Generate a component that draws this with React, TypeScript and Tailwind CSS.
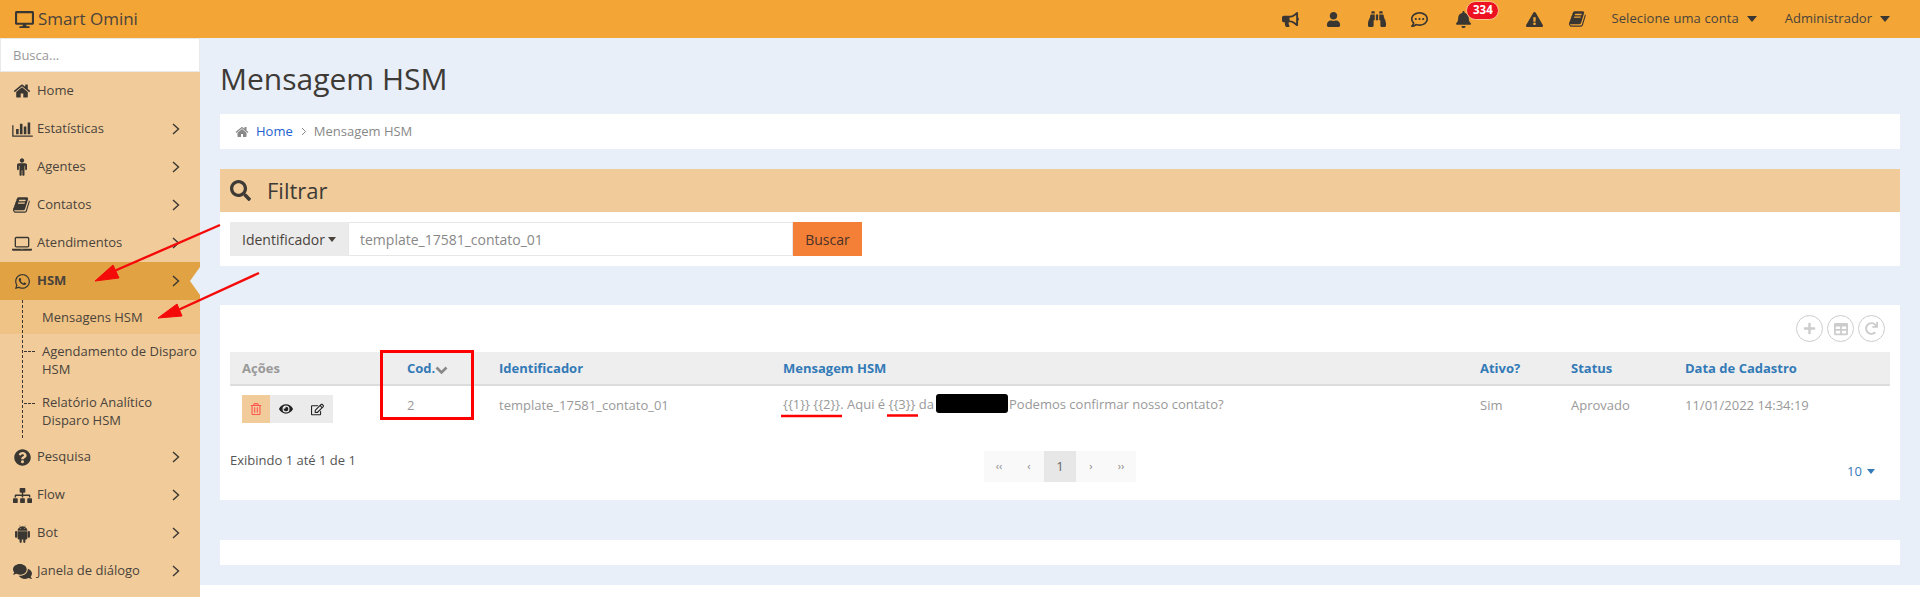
import type { ReactNode } from "react";
import {
  FaBell,
  FaBinoculars,
  FaBullhorn,
  FaComments,
  FaDesktop,
  FaExclamationTriangle,
  FaEye,
  FaPlus,
  FaQuestionCircle,
  FaRedo,
  FaRegCommentDots,
  FaRegEdit,
  FaRegTrashAlt,
  FaSearch,
  FaSitemap,
  FaTable,
  FaUser,
  FaWhatsapp,
} from "react-icons/fa";

const HOME_PATH =
  "M1472 992v480q0 26-19 45t-45 19h-384v-384h-256v384h-384q-26 0-45-19t-19-45v-480q0-1 .5-3t.5-3l575-474 575 474q1 2 1 6zm223-69l-62 74q-8 9-21 11h-3q-13 0-21-7l-692-577-692 577q-12 8-24 7-13-2-21-11l-62-74q-8-10-7-23.5t11-21.5l719-599q32-26 76-26t76 26l244 204v-195q0-14 9-23t23-9h192q14 0 23 9t9 23v408l219 182q10 8 11 21.5t-7 23.5z";
const BOOK_PATH =
  "M1639 478q40 57 18 129l-275 906q-19 64-76.5 107.5t-122.5 43.5h-923q-77 0-148.5-53.5t-99.5-131.5q-24-67-2-127 0-4 3-27t4-37q1-8-3-21.5t-3-19.5q2-11 8-21t16.5-23.5 16.5-23.5q23-38 45-91.5t30-91.5q3-10 .5-30t-.5-28q3-11 17-28t17-23q21-36 42-92t25-90q1-9-2.5-32t.5-28q4-13 22-30.5t22-22.5q19-26 42.5-84.5t27.5-96.5q1-8-3-25.5t-2-26.5q2-8 9-18t18-23 17-21q8-12 16.5-30.5t15-35 16-36 19.5-32 26.5-23.5 36-11.5 47.5 5.5l-1 3q38-9 51-9h761q74 0 114 56t18 130l-274 906q-36 119-71.5 153.5t-128.5 34.5h-869q-27 0-38 15-11 16-1 43 24 70 144 70h923q29 0 56-15.5t35-41.5l300-987q7-22 5-57 38 15 59 43zm-1064 2q-4 13 2 22.5t20 9.5h608q13 0 25.5-9.5t16.5-22.5l21-64q4-13-2-22.5t-20-9.5h-608q-13 0-25.5 9.5t-16.5 22.5zm-83 256q-4 13 2 22.5t20 9.5h608q13 0 25.5-9.5t16.5-22.5l21-64q4-13-2-22.5t-20-9.5h-608q-13 0-25.5 9.5t-16.5 22.5z";
const CHART_PATH =
  "M640 896v512h-256v-512h256zm384-512v1024h-256v-1024h256zm1024 1152v128h-2048v-1152h128v1024h1920zm-640-896v768h-256v-768h256zm384-384v1152h-256v-1152h256z";
const MALE_PATH =
  "M1024 672v416q0 40-28 68t-68 28-68-28-28-68v-352h-64v912q0 46-33 79t-79 33-79-33-33-79v-464h-64v464q0 46-33 79t-79 33-79-33-33-79v-912h-64v352q0 40-28 68t-68 28-68-28-28-68v-416q0-80 56-136t136-56h640q80 0 136 56t56 136zm-288-480q0 93-65.5 158.5t-158.5 65.5-158.5-65.5-65.5-158.5 65.5-158.5 158.5-65.5 158.5 65.5 65.5 158.5z";
const LAPTOP_PATH =
  "M416 1280q-66 0-113-47t-47-113v-704q0-66 47-113t113-47h1088q66 0 113 47t47 113v704q0 66-47 113t-113 47h-1088zm-32-864v704q0 13 9.5 22.5t22.5 9.5h1088q13 0 22.5-9.5t9.5-22.5v-704q0-13-9.5-22.5t-22.5-9.5h-1088q-13 0-22.5 9.5t-9.5 22.5zm1376 992h160v96q0 40-47 68t-113 28h-1600q-66 0-113-28t-47-68v-96h1760zm-720 96q16 0 16-16t-16-16h-160q-16 0-16 16t16 16h160z";
const ANDROID_PATH =
  "M493 483q16 0 27.5-11.5t11.5-27.5-11.5-27.5-27.5-11.5-27 11.5-11 27.5 11 27.5 27 11.5zm422 0q16 0 27-11.5t11-27.5-11-27.5-27-11.5-27.5 11.5-11.5 27.5 11.5 27.5 27.5 11.5zm-811 175q42 0 72 30t30 72v430q0 43-29.5 73t-72.5 30-73-30-30-73v-430q0-42 30-72t73-30zm1058 19v666q0 46-32 78t-77 32h-75v227q0 43-30 73t-73 30-73-30-30-73v-227h-138v227q0 43-30 73t-73 30q-42 0-72-30t-30-73l-1-227h-74q-46 0-78-32t-32-78v-666h918zm-232-405q107 55 171 153.5t64 215.5h-925q0-117 64-215.5t172-153.5l-71-131q-7-13 5-20 13-6 20 6l72 132q95-42 201-42t201 42l72-132q7-12 20-6 12 7 5 20zm477 488v430q0 43-30 73t-73 30q-42 0-72-30t-30-73v-430q0-43 30-72.5t72-29.5q43 0 73 29.5t30 72.5z";

function Glyph({ d, box, w, h }: { d: string; box: string; w: number; h: number }) {
  return (
    <svg width={w} height={h} viewBox={box} fill="currentColor">
      <path d={d} />
    </svg>
  );
}

function HomeIcon({ size }: { size: number }) {
  return <Glyph d={HOME_PATH} box="0 0 1792 1792" w={size} h={size} />;
}

function BookIcon({ size }: { size: number }) {
  return <Glyph d={BOOK_PATH} box="0 0 1792 1792" w={size} h={size} />;
}

function Chevron() {
  return (
    <svg width="8" height="12" viewBox="0 0 8 12" fill="none" stroke="currentColor" strokeWidth="1.4">
      <path d="M1 1l5.5 5L1 11" />
    </svg>
  );
}

function Caret({ className }: { className: string }) {
  return <span className={`inline-block border-x-transparent ${className}`} />;
}

function MenuItem({ icon, label, arrow = true }: { icon: ReactNode; label: string; arrow?: boolean }) {
  return (
    <div className="flex h-[38px] items-center text-[13px] text-[#4a433c]">
      <div className="flex w-[37px] shrink-0 justify-center pl-[7px] text-[#3a3632]">{icon}</div>
      <span className="flex-1">{label}</span>
      {arrow && (
        <span className="mr-[20px] text-[#3a3632]">
          <Chevron />
        </span>
      )}
    </div>
  );
}

function Sidebar() {
  return (
    <aside className="w-[200px] shrink-0 bg-[#f1cc9a]">
      <div className="h-[34px] border border-[#e9e9e9] bg-white pl-[12px] text-[13px] leading-[32px] text-[#999]">Busca...</div>
      <MenuItem icon={<HomeIcon size={18} />} label="Home" arrow={false} />
      <MenuItem icon={<Glyph d={CHART_PATH} box="0 0 2048 1792" w={21} h={18} />} label="Estatísticas" />
      <MenuItem icon={<Glyph d={MALE_PATH} box="0 -32 1024 1792" w={10} h={18} />} label="Agentes" />
      <MenuItem icon={<BookIcon size={18} />} label="Contatos" />
      <MenuItem icon={<Glyph d={LAPTOP_PATH} box="0 0 1920 1792" w={20} h={19} />} label="Atendimentos" />
      <div className="relative flex h-[38px] items-center bg-[#e0a243] text-[13px] font-bold text-[#4a433c]">
        <div className="flex w-[37px] shrink-0 justify-center pl-[7px] text-[#3a3632]">
          <FaWhatsapp size={17} />
        </div>
        <span className="flex-1">HSM</span>
        <span className="mr-[20px] text-[#3a3632]">
          <Chevron />
        </span>
        <span className="absolute right-0 top-[5px] border-y-[14px] border-r-[10px] border-y-transparent border-r-[#e8eff9]" />
      </div>
      <div className="relative text-[13px] leading-[18px] text-[#4a433c]">
        <span className="absolute bottom-0 left-[22px] top-0 border-l border-dashed border-[#3a3632]" />
        <div className="flex h-[34px] items-center bg-[#efc386] pb-[1px] pl-[42px]">Mensagens HSM</div>
        <div className="relative py-[8px] pl-[42px]">
          <span className="absolute left-[24px] top-[17px] w-[11px] border-t border-dashed border-[#3a3632]" />
          Agendamento de Disparo HSM
        </div>
        <div className="relative pb-[9px] pl-[42px] pt-[7px]">
          <span className="absolute left-[24px] top-[17px] w-[11px] border-t border-dashed border-[#3a3632]" />
          Relatório Analítico Disparo HSM
        </div>
      </div>
      <MenuItem icon={<FaQuestionCircle size={17} />} label="Pesquisa" />
      <MenuItem icon={<FaSitemap size={19} />} label="Flow" />
      <MenuItem icon={<Glyph d={ANDROID_PATH} box="0 0 1408 1792" w={15} h={19} />} label="Bot" />
      <MenuItem icon={<FaComments size={19} />} label="Janela de diálogo" />
    </aside>
  );
}

function TopIcon({ children, className = "w-[44px]" }: { children: ReactNode; className?: string }) {
  return <div className={`relative flex justify-center text-[#3a3632] ${className}`}>{children}</div>;
}

function Header() {
  return (
    <header className="flex h-[38px] shrink-0 items-center bg-[#f3a635] pl-[15px] pr-[30px] text-[#4a433c]">
      <FaDesktop size={19} className="text-[#3a3632]" />
      <span className="ml-[4px] text-[17px]">Smart Omini</span>
      <div className="ml-auto flex items-center text-[13px]">
        <TopIcon className="w-[43px]">
          <FaBullhorn size={17} />
        </TopIcon>
        <TopIcon className="w-[43px]">
          <FaUser size={15} />
        </TopIcon>
        <TopIcon className="w-[43px]">
          <FaBinoculars size={18} />
        </TopIcon>
        <TopIcon className="w-[43px]">
          <FaRegCommentDots size={17} />
        </TopIcon>
        <TopIcon className="mr-[27px] w-[44px]">
          <FaBell size={17} />
          <span className="absolute left-[25px] top-[-10px] flex h-[19px] w-[33px] items-center justify-center rounded-full border border-[#f6c68a] bg-[#ee1122] text-[11.5px] font-bold text-white">
            334
          </span>
        </TopIcon>
        <TopIcon>
          <FaExclamationTriangle size={17} />
        </TopIcon>
        <TopIcon>
          <BookIcon size={18} />
        </TopIcon>
        <span className="ml-[11px] tracking-[0.1px]">Selecione uma conta</span>
        <Caret className="ml-[8px] border-x-[5px] border-t-[6px] border-t-[#3a3632]" />
        <span className="ml-[28px]">Administrador</span>
        <Caret className="ml-[8px] border-x-[5px] border-t-[6px] border-t-[#3a3632]" />
      </div>
    </header>
  );
}

const COLUMNS = "grid grid-cols-[165px_92px_284px_697px_91px_114px_217px]";

function Th({ children, muted = false }: { children: ReactNode; muted?: boolean }) {
  return <div className={`pl-[12px] pt-[2px] font-bold ${muted ? "text-[#999]" : "text-[#337ab7]"}`}>{children}</div>;
}

function Table() {
  return (
    <div className="mx-[10px] text-[13px]">
      <div className={`${COLUMNS} h-[34px] items-center border-b-2 border-[#ddd] bg-[#eee]`}>
        <Th muted>Ações</Th>
        <Th>
          <span className="inline-flex items-center">
            Cod.
            <svg width="13" height="9" viewBox="0 0 13 9" fill="none" stroke="#888" strokeWidth="2.6" className="mt-[2px]">
              <path d="M1.5 1.5l5 5 5-5" />
            </svg>
          </span>
        </Th>
        <Th>Identificador</Th>
        <Th>Mensagem HSM</Th>
        <Th>Ativo?</Th>
        <Th>Status</Th>
        <Th>Data de Cadastro</Th>
      </div>
      <div className={`${COLUMNS} h-[65px] text-[#999]`}>
        <div className="flex pl-[12px] pt-[9px]">
          <span className="flex h-[28px] w-[28px] items-center justify-center bg-[#f1cc9a] text-[#f55]">
            <FaRegTrashAlt size={12} />
          </span>
          <span className="flex h-[28px] w-[32px] items-center justify-center bg-[#ebebeb] text-[#222]">
            <FaEye size={14} />
          </span>
          <span className="flex h-[28px] w-[31px] items-center justify-center bg-[#ebebeb] text-[#222]">
            <FaRegEdit size={13} />
          </span>
        </div>
        <div className="pl-[12px] pt-[9px] leading-[20px]">2</div>
        <div className="pl-[12px] pt-[9px] leading-[20px]">template_17581_contato_01</div>
        <div className="flex pl-[12px] pt-[8px] leading-[20px]">
          <span>{"{{1}} {{2}}. Aqui é {{3}} da"}</span>
          <span className="ml-[2px] mr-[1px] h-[19px] w-[72px] rounded-[3px] bg-black" />
          <span>Podemos confirmar nosso contato?</span>
        </div>
        <div className="pl-[12px] pt-[9px] leading-[20px]">Sim</div>
        <div className="pl-[12px] pt-[9px] leading-[20px]">Aprovado</div>
        <div className="pl-[12px] pt-[9px] leading-[20px]">11/01/2022 14:34:19</div>
      </div>
    </div>
  );
}

function PageButton({ children, active = false, wide = false }: { children: ReactNode; active?: boolean; wide?: boolean }) {
  return (
    <span
      className={`flex h-[31px] items-center justify-center ${wide ? "w-[32px]" : "w-[30px]"} ${
        active ? "bg-[#e7e7e7] text-[#666]" : "bg-[#f9f9f9] text-[#888]"
      }`}
    >
      {children}
    </span>
  );
}

function RoundButton({ children }: { children: ReactNode }) {
  return (
    <span className="flex h-[27px] w-[27px] items-center justify-center rounded-full border border-[#ccc] text-[#ccc]">{children}</span>
  );
}

function Annotations() {
  return (
    <svg width="1920" height="597" className="pointer-events-none absolute left-0 top-0" fill="none">
      <path d="M220 225L112 272" stroke="#f50a0a" strokeWidth="2.4" />
      <path d="M95 281L113 265L119 278Z" fill="#f50a0a" stroke="#f50a0a" />
      <path d="M259 273L176 311" stroke="#f50a0a" strokeWidth="2.4" />
      <path d="M158 318L177 304L182 316Z" fill="#f50a0a" stroke="#f50a0a" />
      <rect x="381.5" y="351.5" width="91" height="67" stroke="#f00" strokeWidth="3" />
      <path d="M781 416H842M887 415.5H918" stroke="#f00" strokeWidth="2.6" />
    </svg>
  );
}

export default function App() {
  return (
    <div
      className="relative flex h-[597px] w-[1920px] flex-col overflow-hidden bg-white"
      style={{ fontFamily: '"Open Sans", "Liberation Sans", sans-serif' }}
    >
      <Header />
      <div className="flex flex-1">
        <Sidebar />
        <main className="flex-1">
          <div className="h-[547px] bg-[#e8eff9] px-[20px]">
            <h1 className="flex h-[76px] items-center pt-[4px] text-[30px] text-[#3e3a36]">Mensagem HSM</h1>
            <nav className="flex h-[35px] items-center bg-white pl-[15px] text-[13px] text-[#888]">
              <HomeIcon size={14} />
              <span className="ml-[7px] text-[#1d5fd0]">Home</span>
              <span className="ml-[8px] mr-[7px]">
                <svg width="6" height="9" viewBox="0 0 6 9" fill="none" stroke="#888" strokeWidth="1">
                  <path d="M1 1l3.5 3.5L1 8" />
                </svg>
              </span>
              <span>Mensagem HSM</span>
            </nav>
            <section className="mt-[20px]">
              <div className="flex h-[43px] items-center bg-[#f1cc9a] pl-[10px] text-[#3e3a36]">
                <FaSearch size={21} />
                <span className="ml-[16px] text-[22px]">Filtrar</span>
              </div>
              <div className="h-[54px] bg-white px-[10px] pt-[10px] text-[14px]">
                <div className="flex h-[34px] w-[632px]">
                  <div className="flex w-[118px] items-center bg-[#ebebeb] pl-[12px] text-[#4a433c]">
                    Identificador
                    <Caret className="ml-[3px] border-x-[4px] border-t-[5px] border-t-[#4a433c]" />
                  </div>
                  <div className="flex flex-1 items-center border border-[#e7e7e7] pl-[11px] text-[#888]">template_17581_contato_01</div>
                  <div className="flex w-[69px] items-center justify-center bg-[#f47f36] text-[#4a332a]">Buscar</div>
                </div>
              </div>
            </section>
            <section className="mt-[39px] h-[195px] bg-white">
              <div className="flex h-[47px] justify-end gap-[4px] pr-[15px] pt-[10px]">
                <RoundButton>
                  <FaPlus size={13} />
                </RoundButton>
                <RoundButton>
                  <FaTable size={14} />
                </RoundButton>
                <RoundButton>
                  <FaRedo size={13} />
                </RoundButton>
              </div>
              <Table />
              <div className="grid h-[31px] grid-cols-3 px-[10px] text-[13px]">
                <span className="mt-[-1px] leading-[20px] text-[#555]">Exibindo 1 até 1 de 1</span>
                <div className="flex justify-self-center text-[11px]">
                  <PageButton>‹‹</PageButton>
                  <PageButton>‹</PageButton>
                  <PageButton active wide>
                    <span className="text-[13px]">1</span>
                  </PageButton>
                  <PageButton>›</PageButton>
                  <PageButton>››</PageButton>
                </div>
                <div className="flex items-center justify-self-end pr-[15px] pt-[10px] text-[#337ab7]">
                  10
                  <Caret className="ml-[5px] border-x-[4px] border-t-[5px] border-t-[#337ab7]" />
                </div>
              </div>
            </section>
            <div className="mt-[40px] h-[25px] bg-white" />
          </div>
        </main>
      </div>
      <Annotations />
    </div>
  );
}
